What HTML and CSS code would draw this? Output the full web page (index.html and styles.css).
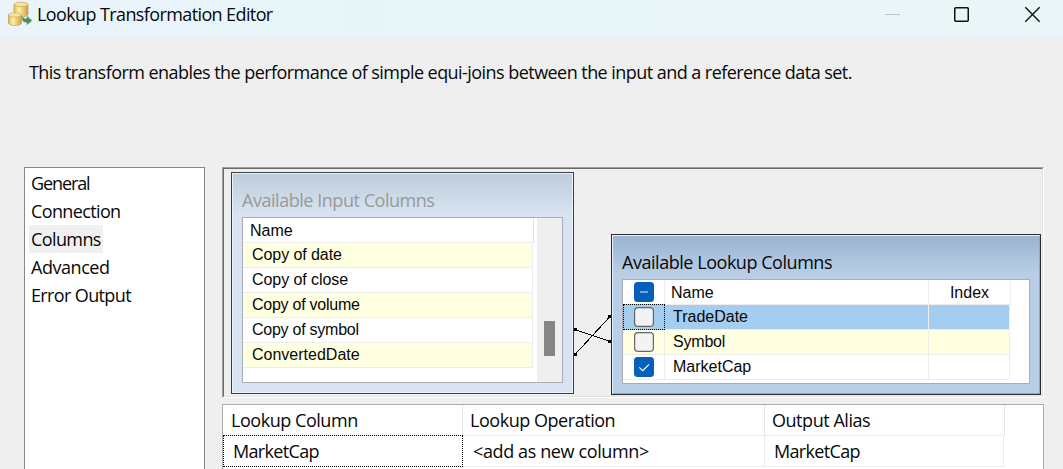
FILE: index.html
```html
<!DOCTYPE html>
<html lang="en">
<head>
<meta charset="utf-8">
<title>Lookup Transformation Editor</title>
<link rel="stylesheet" href="styles.css">
</head>
<body>
<header class="titlebar">
  <svg class="app-icon" width="26" height="26" viewBox="0 0 26 26">
    <defs>
      <linearGradient id="gold"><stop offset="0" stop-color="#e0bb58"/><stop offset=".35" stop-color="#fff0a8"/><stop offset="1" stop-color="#cfa145"/></linearGradient>
    </defs>
    <path d="M6 3.500v10c0 3 14 3 14 0v-10z" fill="url(#gold)" stroke="#bd9a50" stroke-width=".7"/>
    <ellipse cx="13" cy="3.500" rx="7" ry="2.200" fill="#f7e596" stroke="#c7a45b" stroke-width=".7"/>
    <path d="M.5 14v8c0 3.300 13 3.300 13 0v-8z" fill="url(#gold)" stroke="#bd9a50" stroke-width=".7"/>
    <ellipse cx="7" cy="14" rx="6.500" ry="2.200" fill="#f7e596" stroke="#c7a45b" stroke-width=".7"/>
    <path d="M14.500 15.500c1 2 2.500 2.500 4.500 2.200v-2.500l5 4.400-5 4.200v-2.500c-4 0-5.500-2-4.500-5.800z" fill="#4b9151" stroke="#7eae78" stroke-width=".6"/>
  </svg>
  <h1 class="title">Lookup Transformation Editor</h1>
  <svg class="controls" width="163" height="36" viewBox="0 0 163 36">
    <path d="M0 14.500h15" stroke="#bcc4c7"/>
    <rect x="69.750" y="7.750" width="13.500" height="13.500" rx="1" fill="none" stroke="#111" stroke-width="1.500"/>
    <path d="M140.300 7.300l14.400 14.400M154.700 7.300l-14.400 14.400" stroke="#111" stroke-width="1.400"/>
  </svg>
</header>
<p class="intro">This transform enables the performance of simple equi-joins between the input and a reference data set.</p>
<main class="content">
  <nav class="pages">
    <a class="page general">General</a>
    <a class="page connection">Connection</a>
    <a class="page selected">Columns</a>
    <a class="page advanced">Advanced</a>
    <a class="page error">Error Output</a>
  </nav>
  <div class="workspace">
    <section class="diagram">
      <svg class="joins" width="40" height="45" viewBox="0 0 40 45">
        <path d="M3 14.500L38 26.500M3 39.500L38 1.500" stroke="#000" fill="none" shape-rendering="crispEdges"/>
        <path d="M2 13h3v3h-3zM2 38h3v3h-3zM36 0h3v3h-3zM36 25h3v3h-3z" fill="#000"/>
      </svg>
      <div class="window input-window">
        <h2 class="window-title input-title">Available Input Columns</h2>
        <div class="input-list">
          <div class="input-rows">
            <div class="input-head">Name</div>
            <div class="input-row odd">Copy of date</div>
            <div class="input-row">Copy of close</div>
            <div class="input-row odd volume">Copy of volume</div>
            <div class="input-row volume">Copy of symbol</div>
            <div class="input-row odd converted">ConvertedDate</div>
          </div>
          <div class="scrollbar"><div class="thumb"></div></div>
        </div>
      </div>
      <div class="window lookup-window">
        <h2 class="window-title lookup-title">Available Lookup Columns</h2>
        <div class="lookup-list">
          <div class="lookup-row head">
            <div class="check-cell"><svg class="box" width="20" height="20" viewBox="0 0 20 20"><rect width="20" height="20" rx="3.500" fill="#0560ba"/><path d="M6 10h8" stroke="#8fbbe4" stroke-width="1.600"/></svg></div>
            <div class="name-cell">Name</div><div class="index-cell">Index</div>
          </div>
          <div class="lookup-row active">
            <div class="check-cell focus"><svg class="box" width="20" height="20" viewBox="0 0 20 20"><rect x=".6" y=".6" width="18.800" height="18.800" rx="3.500" fill="#f3f3f3" stroke="#666" stroke-width="1.200"/></svg></div>
            <div class="name-cell">TradeDate</div><div class="index-cell"></div>
          </div>
          <div class="lookup-row odd">
            <div class="check-cell"><svg class="box" width="20" height="20" viewBox="0 0 20 20"><rect x=".6" y=".6" width="18.800" height="18.800" rx="3.500" fill="#f3f3f3" stroke="#666" stroke-width="1.200"/></svg></div>
            <div class="name-cell symbol">Symbol</div><div class="index-cell"></div>
          </div>
          <div class="lookup-row">
            <div class="check-cell"><svg class="box" width="20" height="20" viewBox="0 0 20 20"><rect width="20" height="20" rx="3.500" fill="#0560ba"/><path d="M5.300 10.300l3.400 3.400 6.300-6.300" fill="none" stroke="#fff" stroke-width="1.100"/></svg></div>
            <div class="name-cell">MarketCap</div><div class="index-cell"></div>
          </div>
        </div>
      </div>
    </section>
    <section class="mapping">
      <div class="map-row map-head"><div class="map-cell">Lookup Column</div><div class="map-cell">Lookup Operation</div><div class="map-cell">Output Alias</div></div>
      <div class="map-row map-data"><div class="map-cell map-focus"><span class="cap">MarketCap</span></div><div class="map-cell"><span class="add">&lt;add as new column&gt;</span></div><div class="map-cell"><span class="cap">MarketCap</span></div></div>
    </section>
  </div>
</main>
</body>
</html>
```
FILE: styles.css
```css
* { box-sizing: border-box; }
body { margin: 0; width: 1063px; height: 469px; overflow: hidden; background: #efefef; color: #080808; font: 18px/28px "Open Sans", "Noto Sans", sans-serif; letter-spacing: -.46px; white-space: nowrap; }
h1, h2, p { margin: 0; font-weight: 400; font-size: 18px; }
.titlebar { display: flex; align-items: flex-start; height: 37px; padding-left: 8px; background: linear-gradient(90deg, #e9f4fb, #e8f6f7 50%, #ebf5f8); }
.app-icon { margin-top: 1px; }
.title { margin-left: 3px; line-height: 29px; letter-spacing: -.61px; }
.controls { margin-left: auto; margin-right: 15px; }
.intro { height: 130px; padding: 21px 0 0 29px; letter-spacing: -.55px; }
.content { display: flex; height: 302px; padding-left: 24px; }
.pages { display: flex; flex-direction: column; align-items: flex-start; width: 181px; height: 302px; padding: 1px 4px; background: #fff; border: 1px solid #828790; border-bottom: 0; }
.page { height: 28px; padding: 0 2px; line-height: 29px; }
.general { letter-spacing: -1.1px; }
.connection, .error { letter-spacing: -.63px; }
.selected { width: 74px; background: #f0f0f0; letter-spacing: -.6px; }
.workspace { width: 822px; margin-left: 17px; }
.diagram { position: relative; width: 822px; height: 231px; border: 1px solid; border-color: #a0a0a0 #fff #fff #a0a0a0; }
.diagram::before { content: ""; position: absolute; inset: 0; border: 1px solid; border-color: #696969 #e3e3e3 #e3e3e3 #696969; }
.joins { position: absolute; left: 349px; top: 147px; }
.window { position: absolute; border: 1px solid #3c3d40; }
.input-window { left: 8px; top: 4px; width: 343px; height: 222px; padding: 14px 10px 10px; background: linear-gradient(#bdccdb, #d7e3f0 40px, #d7e3f0); box-shadow: inset 0 0 0 1px #edf3fa; }
.lookup-window { left: 388px; top: 66px; width: 430px; height: 161px; padding: 14px 10px 10px; background: linear-gradient(#9bb3d0, #b9cfe8 40px, #b9cfe8); border-color: #292b2e; box-shadow: inset 1px 1px #e7effa, inset -1px -1px #59bfdf; }
.window-title { height: 30px; line-height: 27px; }
.input-title { color: #999; }
.input-list { display: flex; justify-content: space-between; width: 321px; height: 166px; background: #fff; border: 1px solid #abadb3; }
.input-rows, .lookup-list { font: 16px/24px "Liberation Sans", Arial, sans-serif; letter-spacing: 0; }
.input-rows { width: 291px; }
.input-head { height: 25px; padding-left: 7px; line-height: 25px; border-right: 1px solid #e3e3e3; border-bottom: 1px solid #ededed; }
.input-row { width: 290px; height: 25px; padding-left: 9px; line-height: 23px; border-right: 1px solid #ededed; border-bottom: 1px solid #ededed; letter-spacing: -.07px; }
.volume { letter-spacing: -.25px; }
.converted { letter-spacing: 0; }
.odd { background: #ffffe1; }
.scrollbar { width: 25px; padding: 103px 0 0 7px; background: #efefef; }
.thumb { width: 11px; height: 35px; background: #858585; }
.lookup-list { width: 408px; height: 105px; background: #fff; border: 1px solid #abadb3; }
.lookup-row { display: grid; grid-template-columns: 42px 264px 81px; width: 387px; height: 25px; }
.head { width: 388px; grid-template-columns: 42px 264px 82px; }
.lookup-row > div { height: 25px; border-right: 1px solid #ededed; border-bottom: 1px solid #ededed; }
.active { background: #a4cdef; }
.lookup-row > .check-cell { padding: 2px 0 0 11px; }
.box { display: block; }
.lookup-row > .focus { height: 26px; margin-top: -1px; padding: 2px 0 0 10px; border: 1px dotted #000; background: #a4cdef; z-index: 1; }
.name-cell { padding-left: 8px; line-height: 23px; }
.symbol { letter-spacing: -.2px; }
.head .name-cell { padding-left: 6px; line-height: 25px; }
.index-cell { text-align: center; line-height: 25px; }
.mapping { height: 65px; margin-top: 6px; background: #fff; border: 1px solid #abadb3; border-bottom: 0; }
.map-row { display: grid; grid-template-columns: 240px 302px 239px; width: 781px; height: 31px; line-height: 31px; }
.map-head { width: 782px; grid-template-columns: 240px 302px 240px; }
.map-cell { height: 31px; padding-left: 10px; border-right: 1px solid #ededed; border-bottom: 1px solid #ededed; }
.map-head .map-cell { padding-left: 8px; border-right-color: #e3e3e3; }
.map-head .map-cell + .map-cell { padding-left: 7px; }
.map-data .map-cell + .map-cell { padding-left: 9px; }
.map-data .map-focus { height: 32px; margin-top: -1px; padding-left: 9px; border: 1px dotted #000; }
.cap { letter-spacing: -.66px; }
.add { margin-left: 1px; letter-spacing: -.38px; }
```
